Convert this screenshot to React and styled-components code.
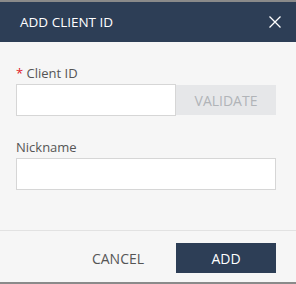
import styled, { createGlobalStyle } from 'styled-components';

const GlobalStyle = createGlobalStyle`
   html, body {
      margin: 0;
      padding: 0;
      background: #f6f6f6;
   }
   * {
      box-sizing: border-box;
   }
`;

export default function App() {
   return (
      <>
         <GlobalStyle />
         <Dialog>
            <Header>
               <Title>ADD CLIENT ID</Title>
               <CloseButton aria-label="Close">
                  <svg width="12" height="12" viewBox="0 0 12 12">
                     <path d="M0.5 0.5 L11.5 11.5 M11.5 0.5 L0.5 11.5" stroke="#fff" strokeWidth="1.3" fill="none" />
                  </svg>
               </CloseButton>
            </Header>

            <Body>
               <Field>
                  <Label>
                     <Required>*</Required> Client ID
                  </Label>
                  <InputRow>
                     <TextInput />
                     <ValidateButton disabled>VALIDATE</ValidateButton>
                  </InputRow>
               </Field>

               <Field>
                  <Label>Nickname</Label>
                  <TextInput />
               </Field>
            </Body>

            <Footer>
               <CancelButton>CANCEL</CancelButton>
               <PrimaryButton>ADD</PrimaryButton>
            </Footer>
         </Dialog>
      </>
   );
}

const Dialog = styled.div`
   width: 296px;
   height: 284px;
   display: flex;
   flex-direction: column;
   background: #f6f6f6;
   border-top: 2px solid #8a8a8a;
   border-bottom: 2px solid #8a8a8a;
   font-family: 'Open Sans', 'Noto Sans', sans-serif;
`;

const Header = styled.div`
   height: 40px;
   flex: none;
   display: flex;
   align-items: center;
   justify-content: space-between;
   padding: 0 15px 0 20px;
   background: #2d3e56;
`;

const Title = styled.h1`
   margin: 0;
   font-size: 13.5px;
   font-weight: 400;
   color: #fff;
   line-height: 18px;
`;

const CloseButton = styled.button`
   border: none;
   background: none;
   padding: 0;
   width: 12px;
   height: 12px;
   display: flex;
   cursor: pointer;
`;

const Body = styled.div`
   height: 188px;
   flex: none;
   padding: 22px 20px 0 16px;
   display: flex;
   flex-direction: column;
   gap: 22px;
`;

const Field = styled.div`
   display: flex;
   flex-direction: column;
   gap: 2px;
`;

const Label = styled.label`
   font-size: 13px;
   line-height: 18px;
   color: #555;
`;

const Required = styled.span`
   color: #e0202a;
`;

const InputRow = styled.div`
   display: flex;
   align-items: center;
`;

const TextInput = styled.input`
   display: block;
   width: 100%;
   min-width: 0;
   height: 32px;
   flex: none;
   border: 1px solid #d6d6d6;
   background: #fff;
   padding: 0 8px;
   font: inherit;
   outline: none;
   margin: 0;

   ${InputRow} & {
      flex: 1;
      width: auto;
   }
`;

const ValidateButton = styled.button`
   width: 100px;
   height: 30px;
   flex: none;
   border: none;
   background: #e6e7e9;
   color: #b1b4b8;
   font-family: inherit;
   font-size: 14px;
   padding: 0;
`;

const Footer = styled.div`
   flex: 1;
   display: flex;
   justify-content: flex-end;
   align-items: flex-start;
   padding: 12px 20px 0 0;
   border-top: 1px solid #e2e2e2;
`;

const CancelButton = styled.button`
   width: 100px;
   height: 30px;
   margin-right: 8px;
   border: none;
   background: none;
   color: #555;
   font-family: inherit;
   font-size: 14px;
   padding: 0;
   cursor: pointer;
`;

const PrimaryButton = styled.button`
   width: 100px;
   height: 30px;
   border: none;
   background: #2d3e56;
   color: #fff;
   font-family: inherit;
   font-size: 14px;
   padding: 0;
   cursor: pointer;
`;
